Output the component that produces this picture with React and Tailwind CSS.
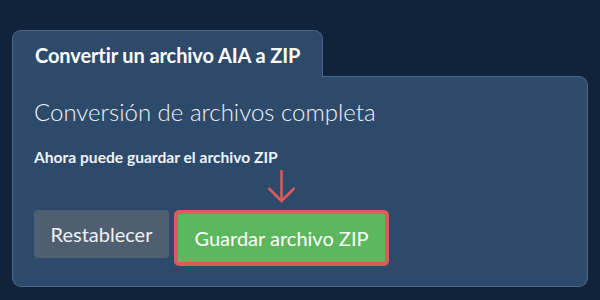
export default function App() {
  return (
    <div className="w-[600px] h-[300px] bg-[#10233a] pt-[30px] pl-[12px] pr-[12px] overflow-hidden" style={{ fontFamily: "Lato, 'Noto Sans', sans-serif" }}>
      <div className="relative z-10 w-[311px] h-[47px] -mb-px bg-[#2e4a6b] border border-b-0 border-[#4a6789] rounded-t-[9px] pl-[22px] pt-[11px]">
        <span className="text-white font-bold text-[20px] leading-[26px] tracking-[-0.1px]">Convertir un archivo AIA a ZIP</span>
      </div>
      <div className="w-[576px] h-[211px] bg-[#2e4a6b] border border-[#4a6789] rounded-b-[9px] rounded-tr-[9px] pl-[21px] pt-[20px]">
        <div className="text-[#eef2f6] font-light text-[24px] leading-[30px]">Conversión de archivos completa</div>
        <div className="mt-[20px] text-[#eef2f6] font-bold text-[15.6px] leading-[20px]">Ahora puede guardar el archivo ZIP</div>
        <div className="h-[43px] ml-[226px] relative">
          <svg width="30" height="40" viewBox="0 0 30 40" className="absolute left-[7px] top-[-3px]">
            <line x1="14.5" y1="6" x2="14.5" y2="37" stroke="#e05a5a" strokeWidth="2.5" />
            <polyline points="1.5,24 14.5,37 27.5,24" fill="none" stroke="#e05a5a" strokeWidth="2.5" />
          </svg>
        </div>
        <div className="flex items-start gap-[5px]">
          <button className="w-[135px] h-[48px] bg-[#4f5f71] rounded-[4px] text-[#eef2f6] text-[20px] leading-[24px]">Restablecer</button>
          <button className="w-[215px] h-[56px] bg-[#5cb85c] border-[4px] border-[#df5a5a] rounded-[5px] text-white text-[20px] leading-[24px]">Guardar archivo ZIP</button>
        </div>
      </div>
    </div>
  );
}
